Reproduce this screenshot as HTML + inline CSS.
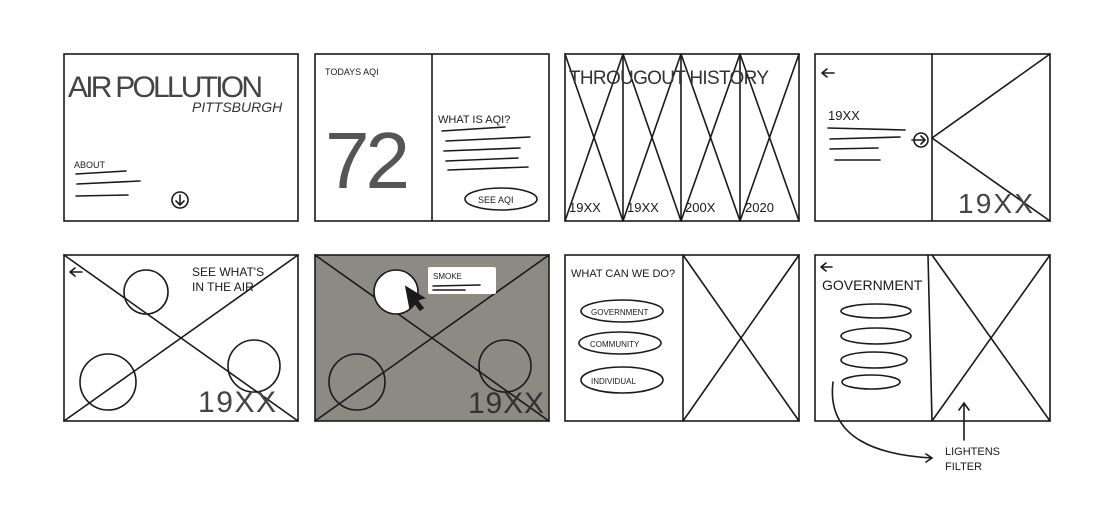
<!DOCTYPE html>
<html><head><style>html,body{margin:0;padding:0;background:#fff}svg{display:block}</style></head><body>
<svg width="1095" height="526" viewBox="0 0 1095 526" xmlns="http://www.w3.org/2000/svg" font-family="Liberation Sans, sans-serif" fill="none" stroke="#1a1a1a" stroke-width="1.6" stroke-linecap="round">
<!-- frame1 -->
<rect x="64" y="54" width="234" height="167"/>
<text x="68" y="97" font-size="30" fill="#444" stroke="none" textLength="195" lengthAdjust="spacing">AIR POLLUTION</text>
<text x="192" y="112" font-size="14" fill="#333" stroke="none" font-style="italic">PITTSBURGH</text>
<text x="74" y="168" font-size="9" fill="#1a1a1a" stroke="none">ABOUT</text>
<path d="M76 174 L126 171 M77 184 L140 181 M76 196 L128 195"/>
<circle cx="180" cy="200" r="8"/><path d="M180 195 V205 M176 201 L180 205 L184 201"/>
<!-- frame2 -->
<rect x="315" y="54" width="234" height="167"/><path d="M432 54 V221"/>
<text x="325" y="75" font-size="9" fill="#1a1a1a" stroke="none">TODAYS AQI</text>
<text x="325" y="188" font-size="80" fill="#555" stroke="none" textLength="85" lengthAdjust="spacing">72</text>
<text x="438" y="123" font-size="11" fill="#1a1a1a" stroke="none">WHAT IS AQI?</text>
<path d="M442 131 L505 127 M446 141 L530 137 M444 151 L520 148 M446 161 L518 158 M448 170 L528 167"/>
<ellipse cx="501" cy="199" rx="36" ry="11"/>
<text x="478" y="203" font-size="9" fill="#1a1a1a" stroke="none">SEE AQI</text>
<!-- frame3 -->
<rect x="565" y="54" width="234" height="167"/>
<path d="M623 54 V221 M681 54 V221 M740 54 V221"/>
<path d="M565 54 L623 221 M623 54 L565 221 M623 54 L681 221 M681 54 L623 221 M681 54 L740 221 M740 54 L681 221 M740 54 L799 221 M799 54 L740 221"/>
<text x="569" y="84" font-size="19" fill="#333" stroke="none" textLength="200" lengthAdjust="spacing">THROUGOUT HISTORY</text>
<text x="569" y="212" font-size="13" fill="#1a1a1a" stroke="none">19XX</text>
<text x="627" y="212" font-size="13" fill="#1a1a1a" stroke="none">19XX</text>
<text x="685" y="212" font-size="13" fill="#1a1a1a" stroke="none">200X</text>
<text x="745" y="212" font-size="13" fill="#1a1a1a" stroke="none">2020</text>
<!-- frame4 -->
<rect x="815" y="54" width="235" height="167"/><path d="M932 54 V221"/>
<path d="M932 138 L1050 54 M932 138 L1050 221"/>
<circle cx="921" cy="140" r="7"/><path d="M912 140 H925 M921 136 L925 140 L921 144"/>
<path d="M822 73 H834 M822 73 L827 69 M822 73 L827 77"/>
<text x="828" y="120" font-size="13" fill="#1a1a1a" stroke="none">19XX</text>
<path d="M828 128 L905 130 M830 139 L900 137 M830 149 L878 148 M835 160 L880 160"/>
<text x="958" y="213" font-size="28" fill="#444" stroke="none" textLength="75" lengthAdjust="spacing">19XX</text>
<!-- frame5 -->
<rect x="64" y="255" width="234" height="166"/>
<path d="M64 255 L298 421 M298 255 L64 421"/>
<path d="M70 272 H82 M70 272 L75 268 M70 272 L75 276"/>
<text x="192" y="276" font-size="12" fill="#1a1a1a" stroke="none">SEE WHAT'S</text>
<text x="192" y="291" font-size="12" fill="#1a1a1a" stroke="none">IN THE AIR</text>
<circle cx="146" cy="292" r="22"/><circle cx="108" cy="382" r="28"/><circle cx="254" cy="366" r="26"/>
<text x="198" y="412" font-size="30" fill="#444" stroke="none" textLength="78" lengthAdjust="spacing">19XX</text>
<!-- frame6 -->
<rect x="315" y="255" width="234" height="166" fill="#8d8983"/>
<path d="M315 255 L549 421 M549 255 L315 421"/>
<circle cx="396" cy="292" r="22" fill="#fff"/>
<path d="M406 287 L410 308 L414 302 L420 310 L423 308 L417 300 L424 298 Z" fill="#1a1a1a"/>
<rect x="428" y="267" width="68" height="27" rx="2" fill="#fff" stroke="none"/>
<text x="433" y="279" font-size="8" fill="#1a1a1a" stroke="none">SMOKE</text>
<path d="M433 286 L480 285 M433 290 L465 290"/>
<circle cx="357" cy="382" r="28"/><circle cx="505" cy="366" r="26"/>
<text x="468" y="413" font-size="30" fill="#333" stroke="none" textLength="76" lengthAdjust="spacing">19XX</text>
<!-- frame7 -->
<rect x="565" y="255" width="234" height="166"/><path d="M683 255 V421"/>
<path d="M683 255 L799 421 M799 255 L683 421"/>
<text x="571" y="277" font-size="11" fill="#1a1a1a" stroke="none">WHAT CAN WE DO?</text>
<ellipse cx="622" cy="311" rx="41" ry="11"/><text x="591" y="315" font-size="8" fill="#1a1a1a" stroke="none">GOVERNMENT</text>
<ellipse cx="620" cy="343" rx="41" ry="11"/><text x="590" y="347" font-size="8" fill="#1a1a1a" stroke="none">COMMUNITY</text>
<ellipse cx="622" cy="380" rx="41" ry="13"/><text x="591" y="384" font-size="8" fill="#1a1a1a" stroke="none">INDIVIDUAL</text>
<!-- frame8 -->
<rect x="815" y="255" width="235" height="166"/><path d="M928 255 L932 421"/>
<path d="M932 255 L1050 421 M1050 255 L932 421"/>
<path d="M821 267 H832 M821 267 L826 263 M821 267 L826 271"/>
<text x="822" y="290" font-size="14" fill="#1a1a1a" stroke="none">GOVERNMENT</text>
<ellipse cx="876" cy="311" rx="35" ry="7"/><ellipse cx="876" cy="336" rx="35" ry="8"/><ellipse cx="874" cy="360" rx="33" ry="8"/><ellipse cx="871" cy="382" rx="29" ry="7"/>
<path d="M833 382 C826 440 880 455 932 458 M926 454 L932 458 L926 462"/>
<path d="M964 440 V403 M959 410 L964 403 L969 410"/>
<text x="945" y="455" font-size="11" fill="#1a1a1a" stroke="none">LIGHTENS</text>
<text x="945" y="470" font-size="11" fill="#1a1a1a" stroke="none">FILTER</text>
</svg>
</body></html>
